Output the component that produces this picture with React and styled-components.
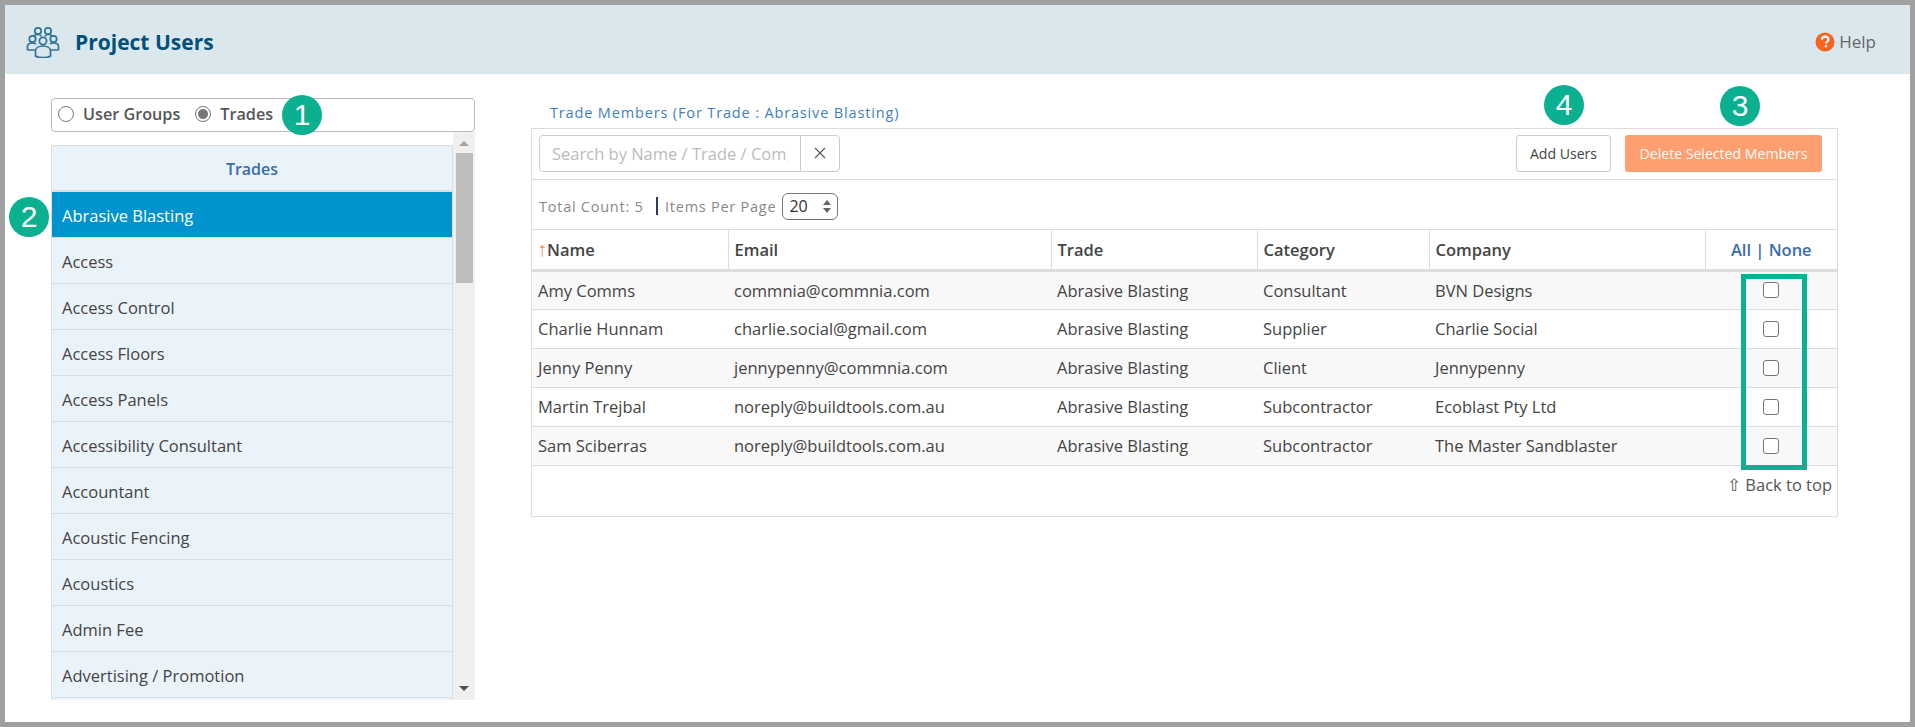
import React from 'react';
import styled, { createGlobalStyle } from 'styled-components';

const GlobalStyle = createGlobalStyle`
  html, body {
    margin: 0;
    padding: 0;
    background: #fff;
    overflow: hidden;
  }
  * {
    box-sizing: border-box;
  }
`;

const Page = styled.div`
  width: 1915px;
  height: 727px;
  border: 5px solid #a0a0a0;
  background: #fff;
  font-family: "Open Sans", "Noto Sans", sans-serif;
  font-size: 16.5px;
  color: #333;
  overflow: hidden;
`;

const Header = styled.header`
  display: flex;
  align-items: center;
  height: 69px;
  padding: 4px 34px 0 21px;
  background: #dae8ed;
`;

const Title = styled.h1`
  margin: 0 0 0 15px;
  font-size: 21px;
  font-weight: 700;
  color: #03507a;
  flex: 1;
`;

const Help = styled.div`
  display: flex;
  align-items: center;
  gap: 4px;
  font-size: 17px;
  color: #666;
`;

const Main = styled.main`
  display: flex;
  align-items: flex-start;
  padding: 24px 0 0 46px;
`;

const Sidebar = styled.aside`
  width: 424px;
  flex: none;
`;

const RadioBox = styled.div`
  position: relative;
  display: flex;
  align-items: center;
  height: 34px;
  padding: 0 0 2px 6px;
  border: 1px solid #bbb;
  border-radius: 4px;
`;

const RadioLabel = styled.label`
  display: flex;
  align-items: center;
  gap: 9px;
  margin-right: 15px;
  font-size: 16.2px;
  font-weight: 600;
  color: #555;
`;

const RadioDot = styled.span`
  width: 16px;
  height: 16px;
  border-radius: 50%;
  border: 1px solid #767676;
  background: ${(p) => (p.$checked ? 'radial-gradient(circle, #777 0 4.5px, #fff 5.5px)' : '#fff')};
`;

const ListFrame = styled.div`
  position: relative;
  display: flex;
  height: 568px;
  overflow: hidden;
`;

const List = styled.div`
  width: 402px;
  flex: none;
  padding-top: 13px;
`;

const ListHeader = styled.div`
  display: flex;
  align-items: center;
  justify-content: center;
  height: 47px;
  padding-top: 2px;
  background: #ebf3fa;
  border: 1px solid #ddd;
  border-width: 1px 1px 2px;
  font-size: 16px;
  font-weight: 600;
  color: #3a6ea8;
`;

const ListItem = styled.div`
  display: flex;
  align-items: center;
  height: 46px;
  padding: 1px 10px 0;
  background: ${(p) => (p.$active ? '#0093cd' : '#ebf3fa')};
  border: 1px solid #ddd;
  border-width: 0 1px 1px;
  color: ${(p) => (p.$active ? '#fff' : '#444')};
`;

const Scrollbar = styled.div`
  position: relative;
  width: 22px;
  flex: none;
  display: flex;
  flex-direction: column;
  align-items: center;
  justify-content: space-between;
  background: #f0f0f0;
  padding: 9px 0;
`;

const ScrollThumb = styled.div`
  position: absolute;
  top: 21px;
  left: 3px;
  width: 17px;
  height: 130px;
  background: #bdbdbd;
`;

const ScrollArrow = styled.span`
  width: 0;
  height: 0;
  border-left: 5px solid transparent;
  border-right: 5px solid transparent;
  ${(p) => (p.$up ? 'border-bottom: 5px solid #a3a3a3;' : 'border-top: 5px solid #505050;')}
`;

const Content = styled.section`
  position: relative;
  margin-left: 56px;
  width: 1307px;
  padding-top: 5px;
`;

const PanelTitle = styled.div`
  height: 25px;
  padding-left: 19px;
  font-size: 14.5px;
  letter-spacing: 0.85px;
  color: #3f7fc0;
`;

const Panel = styled.div`
  position: relative;
  height: 389px;
  border: 1px solid #ddd;
`;

const Toolbar = styled.div`
  display: flex;
  align-items: center;
  justify-content: space-between;
  height: 51px;
  padding: 0 15px 2px 7px;
  border-bottom: 1px solid #ddd;
`;

const SearchBox = styled.div`
  display: flex;
  width: 301px;
  height: 37px;
  border: 1px solid #ccc;
  border-radius: 4px;
`;

const SearchInput = styled.input`
  width: 261px;
  border: none;
  border-right: 1px solid #ccc;
  border-radius: 4px 0 0 4px;
  padding: 0 12px;
  font: inherit;
  outline: none;
  &::placeholder {
    color: #bbb;
    opacity: 1;
  }
`;

const ClearButton = styled.div`
  flex: 1;
  display: flex;
  align-items: center;
  justify-content: center;
`;

const Actions = styled.div`
  display: flex;
  gap: 14px;
`;

const Button = styled.button`
  height: 37px;
  padding: 0;
  width: ${(p) => p.$width}px;
  border-radius: 3px;
  font-family: inherit;
  font-size: 14.1px;
  border: ${(p) => (p.$danger ? 'none' : '1px solid #ccc')};
  background: ${(p) => (p.$danger ? '#ff9e6f' : '#fff')};
  color: ${(p) => (p.$danger ? '#fff' : '#444')};
`;

const CountRow = styled.div`
  display: flex;
  align-items: center;
  height: 50px;
  padding: 3px 0 0 7px;
  font-size: 14.5px;
  letter-spacing: 0.75px;
  color: #888;
  border-bottom: 1px solid #ddd;
`;

const Divider = styled.span`
  width: 2.5px;
  height: 18px;
  margin: 0 7px 0 12px;
  background: #2b3f5c;
`;

const PageSize = styled.div`
  display: flex;
  align-items: center;
  justify-content: space-between;
  width: 56px;
  height: 27px;
  margin-left: 6px;
  padding: 0 6px;
  border: 1px solid #777;
  border-radius: 6px;
  font-size: 16px;
  letter-spacing: 0;
  color: #333;
`;

const Spinner = styled.span`
  display: flex;
  flex-direction: column;
  gap: 3px;
`;

const SpinArrow = styled.span`
  width: 0;
  height: 0;
  border-left: 4.5px solid transparent;
  border-right: 4.5px solid transparent;
  ${(p) => (p.$up ? 'border-bottom: 5px solid #666;' : 'border-top: 5px solid #666;')}
`;

const Table = styled.table`
  width: 100%;
  table-layout: fixed;
  border-collapse: collapse;
  font-size: 16.5px;
`;

const Th = styled.th`
  height: 40px;
  padding: 0 6px;
  text-align: ${(p) => (p.$center ? 'center' : 'left')};
  font-weight: 600;
  color: #444;
  border-bottom: 3px solid #ddd;
  border-right: 1px solid #ddd;
  &:last-child {
    border-right: none;
  }
`;

const NameTh = styled(Th)`
  padding: 0 6px 0 5px;
`;

const Tr = styled.tr`
  background: ${(p) => (p.$odd ? '#f8f8f8' : '#fff')};
`;

const Td = styled.td`
  height: 39px;
  padding: 0 6px;
  color: #444;
  border-bottom: 1px solid #ddd;
  white-space: nowrap;
`;

const CheckCell = styled(Td)`
  padding: 0 0 0 58px;
`;

const CheckBox = styled.span`
  display: block;
  width: 16px;
  height: 16px;
  border: 1px solid #767676;
  border-radius: 3px;
  background: #fff;
`;

const SortArrow = styled.span`
  color: #f58f4f;
  font-size: 20px;
  line-height: 1;
  font-weight: 400;
`;

const BlueLink = styled.span`
  color: #3a6ea8;
`;

const BackToTop = styled.div`
  padding: 7px 5px 0 0;
  text-align: right;
  color: #555;
`;

const CheckHighlight = styled.div`
  position: absolute;
  left: 1209px;
  top: 145px;
  width: 66px;
  height: 196px;
  border: 5px solid #0ab08f;
  pointer-events: none;
`;

const Badge = styled.span`
  position: absolute;
  left: ${(p) => p.$x}px;
  top: ${(p) => p.$y}px;
  display: flex;
  align-items: center;
  justify-content: center;
  width: 40px;
  height: 40px;
  border-radius: 50%;
  background: #0ab08f;
  color: #fff;
  font-family: "Liberation Sans", Arial, sans-serif;
  font-size: 30px;
`;

const trades = [
  'Abrasive Blasting',
  'Access',
  'Access Control',
  'Access Floors',
  'Access Panels',
  'Accessibility Consultant',
  'Accountant',
  'Acoustic Fencing',
  'Acoustics',
  'Admin Fee',
  'Advertising / Promotion',
];

const members = [
  ['Amy Comms', 'commnia@commnia.com', 'Consultant', 'BVN Designs'],
  ['Charlie Hunnam', 'charlie.social@gmail.com', 'Supplier', 'Charlie Social'],
  ['Jenny Penny', 'jennypenny@commnia.com', 'Client', 'Jennypenny'],
  ['Martin Trejbal', 'noreply@buildtools.com.au', 'Subcontractor', 'Ecoblast Pty Ltd'],
  ['Sam Sciberras', 'noreply@buildtools.com.au', 'Subcontractor', 'The Master Sandblaster'],
];

const colWidths = [196, 323, 206, 172, 276, 132];

const GroupIcon = () => (
  <svg width="34" height="32" viewBox="0 0 34 32" fill="none" stroke="#2f7396" strokeWidth="1.7">
    <circle cx="12" cy="5" r="3.2" />
    <circle cx="22" cy="5" r="3.2" />
    <circle cx="6.5" cy="13" r="3.2" />
    <circle cx="27.5" cy="13" r="3.2" />
    <circle cx="17" cy="15" r="3.6" />
    <path d="M8 10c.5-1 2-1.500 4-1.500s3 .7 3.500 2M19 10.500c.5-1.300 1.500-2 3-2 2 0 3.500.5 4 1.500" />
    <path d="M1.500 24v-3.500c0-2 2-3.500 5-3.500 1.500 0 2.800.4 3.500 1M32.500 24v-3.500c0-2-2-3.500-5-3.500-1.500 0-2.800.4-3.500 1M1.500 24H9M25 24h7.500" />
    <path d="M9.500 30v-5c0-3 3-5 7.500-5s7.500 2 7.500 5v5c-2 1.300-4.500 1.700-7.500 1.700s-5.500-.4-7.500-1.700z" />
  </svg>
);

const HelpIcon = () => (
  <svg width="20" height="20" viewBox="0 0 20 20">
    <circle cx="10" cy="10" r="9.500" fill="#fb6420" />
    <path d="M6.800 7.600c.2-1.900 1.500-3 3.400-3 1.800 0 3.200 1 3.200 2.800 0 2.300-2.500 2.300-2.500 4.200" fill="none" stroke="#fff" strokeWidth="2.100" />
    <rect x="9.800" y="13" width="2.200" height="2.300" fill="#fff" />
  </svg>
);

const ClearIcon = () => (
  <svg width="12" height="12" viewBox="0 0 12 12" stroke="#555" strokeWidth="1.100">
    <path d="M1 1l10 10M11 1L1 11" />
  </svg>
);

const App = () => (
  <>
    <GlobalStyle />
    <Page>
      <Header>
        <GroupIcon />
        <Title>Project Users</Title>
        <Help>
          <HelpIcon />
          Help
        </Help>
      </Header>
      <Main>
        <Sidebar>
          <RadioBox>
            <RadioLabel>
              <RadioDot />
              User Groups
            </RadioLabel>
            <RadioLabel>
              <RadioDot $checked />
              Trades
            </RadioLabel>
            <Badge $x={230} $y={-4}>1</Badge>
          </RadioBox>
          <ListFrame>
            <List>
              <ListHeader>Trades</ListHeader>
              {trades.map((trade, i) => (
                <ListItem key={trade} $active={i === 0}>{trade}</ListItem>
              ))}
              <ListItem />
            </List>
            <Scrollbar>
              <ScrollArrow $up />
              <ScrollThumb />
              <ScrollArrow />
            </Scrollbar>
          </ListFrame>
        </Sidebar>
        <Content>
          <PanelTitle>Trade Members (For Trade : Abrasive Blasting)</PanelTitle>
          <Panel>
            <Toolbar>
              <SearchBox>
                <SearchInput placeholder="Search by Name / Trade / Company" readOnly />
                <ClearButton><ClearIcon /></ClearButton>
              </SearchBox>
              <Actions>
                <Button $width={95}>Add Users</Button>
                <Button $width={197} $danger>Delete Selected Members</Button>
              </Actions>
            </Toolbar>
            <CountRow>
              Total Count: 5
              <Divider />
              Items Per Page
              <PageSize>
                20
                <Spinner>
                  <SpinArrow $up />
                  <SpinArrow />
                </Spinner>
              </PageSize>
            </CountRow>
            <Table>
              <colgroup>
                {colWidths.map((w, i) => <col key={i} width={w} />)}
              </colgroup>
              <thead>
                <tr>
                  <NameTh><SortArrow>↑</SortArrow>Name</NameTh>
                  <Th>Email</Th>
                  <Th>Trade</Th>
                  <Th>Category</Th>
                  <Th>Company</Th>
                  <Th $center><BlueLink>All | None</BlueLink></Th>
                </tr>
              </thead>
              <tbody>
                {members.map(([name, email, category, company], i) => (
                  <Tr key={name} $odd={i % 2 === 0}>
                    <Td>{name}</Td>
                    <Td>{email}</Td>
                    <Td>Abrasive Blasting</Td>
                    <Td>{category}</Td>
                    <Td>{company}</Td>
                    <CheckCell><CheckBox /></CheckCell>
                  </Tr>
                ))}
              </tbody>
            </Table>
            <BackToTop>⇧ Back to top</BackToTop>
            <CheckHighlight />
          </Panel>
          <Badge $x={1013} $y={-13}>4</Badge>
          <Badge $x={1189} $y={-12}>3</Badge>
        </Content>
      </Main>
      <Badge $x={9} $y={197}>2</Badge>
    </Page>
  </>
);

export default App;
